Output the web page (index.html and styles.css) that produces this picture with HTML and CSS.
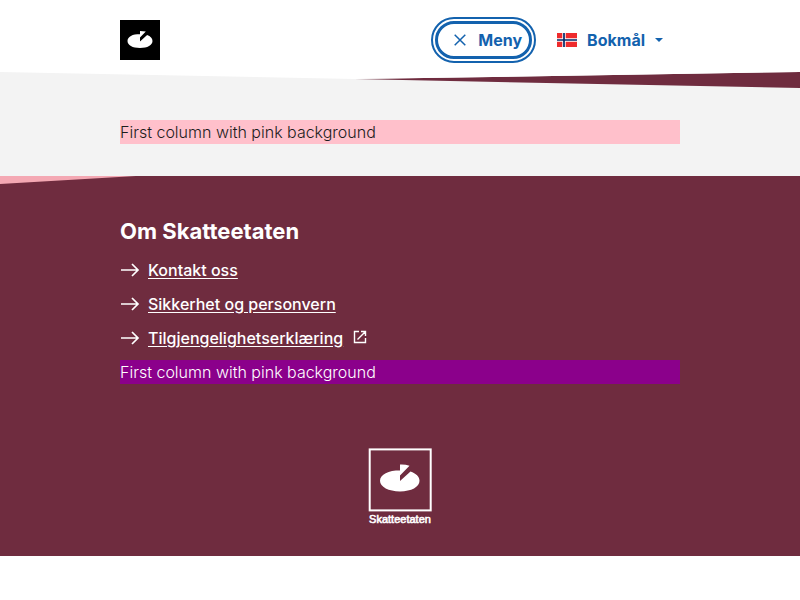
FILE: index.html
```html
<!DOCTYPE html>
<html lang="nb">
<head>
<meta charset="utf-8">
<meta name="viewport" content="width=device-width, initial-scale=1">
<title>Skatteetaten</title>
<link rel="stylesheet" href="styles.css">
</head>
<body>
<header class="header container">
  <a class="header-logo" href="#" aria-label="Skatteetaten">
    <svg viewBox="0 0 40 40" aria-hidden="true"><rect width="40" height="40"/><path fill="#fff" d="M20 14C12.500 14 7.500 16.800 7.500 21S12.500 28 20 28s12.500-2.800 12.500-7c0-2.600-2-4.700-5.400-5.900L20 21.500zM20 11l5.800.6-5.800 6z"/></svg>
  </a>
  <div class="header-actions">
    <button class="menu-button" type="button">
      <svg class="icon-close" viewBox="0 0 12 12" aria-hidden="true"><path d="M.7.700l10.600 10.600M11.300.700L.7 11.300"/></svg>
      <span>Meny</span>
    </button>
    <button class="language-button" type="button">
      <svg class="flag" viewBox="0 0 20 14" aria-hidden="true"><rect width="20" height="14" fill="#ef2b2d"/><path stroke="#fff" stroke-width="3.400" d="M7 0v14M0 7h20"/><path stroke="#002868" stroke-width="1.700" d="M7 0v14M0 7h20"/></svg>
      <span>Bokmål</span>
      <svg class="caret" viewBox="0 0 8 4" aria-hidden="true"><path d="M0 0h8L4 4z"/></svg>
    </button>
  </div>
</header>
<main class="main">
  <svg class="wedge" viewBox="0 0 800 16" preserveAspectRatio="none" aria-hidden="true"><path fill="#6f2c3f" d="M355 7.100L800 0v16z"/><path fill="#fff" d="M0 0l355 7.100L800 0z"/></svg>
  <div class="container main-content">
    <div class="column column-pink">First column with pink background</div>
  </div>
</main>
<footer class="footer">
  <svg class="footer-wedge" viewBox="0 0 800 8" preserveAspectRatio="none" aria-hidden="true"><path d="M0 0h136L0 8z"/></svg>
  <div class="container">
    <h2 class="footer-title">Om Skatteetaten</h2>
    <ul class="links">
      <li><a href="#"><svg class="arrow" viewBox="0 0 20 14" aria-hidden="true"><path d="M1 7h17M12 1l6 6-6 6"/></svg><span>Kontakt oss</span></a></li>
      <li><a href="#"><svg class="arrow" viewBox="0 0 20 14" aria-hidden="true"><path d="M1 7h17M12 1l6 6-6 6"/></svg><span>Sikkerhet og personvern</span></a></li>
      <li><a href="#"><svg class="arrow" viewBox="0 0 20 14" aria-hidden="true"><path d="M1 7h17M12 1l6 6-6 6"/></svg><span>Tilgjengelighetserklæring</span><svg class="external" viewBox="0 0 14 14" aria-hidden="true"><path d="M6 1.500H1.500v11h11V8M8 1.500h4.500V6M12.500 1.500L4.500 9.500"/></svg></a></li>
    </ul>
    <div class="column column-purple">First column with pink background</div>
    <div class="footer-logo">
      <svg viewBox="0 0 64 76" role="img" aria-label="Skatteetaten"><rect x="1.700" y="1.400" width="61" height="61" fill="none" stroke="#fff" stroke-width="2"/><path fill="#fff" d="M32 22.200c-11.400 0-20 4.300-20 10.600s8.600 10.600 20 10.600 19.500-4.300 19.500-10.600c0-4-3.500-7.300-9-9.200L32 33zM32 16.600c3.500-.2 6.500.2 9.500 1.200L32 27.500z"/><text class="logo-text" x="32" y="75" text-anchor="middle">Skatteetaten</text></svg>
    </div>
  </div>
</footer>
</body>
</html>
```
FILE: styles.css
```css
* {
  box-sizing: border-box;
}

body {
  margin: 0;
  background: #fff;
  color: #1c1c1c;
  font: 300 16px/24px Inter, sans-serif;
}

svg {
  display: block;
  flex: none;
}

.container {
  padding-inline: 15%;
}

.header {
  display: flex;
  align-items: center;
  justify-content: space-between;
  padding-top: 16px;
  padding-bottom: 8px;
}

.header-logo svg {
  width: 40px;
  height: 40px;
}

.header-actions {
  display: flex;
  align-items: center;
  gap: 16px;
}

.header-actions button {
  display: flex;
  align-items: center;
  gap: 10px;
  border: 0;
  background: transparent;
  color: #1362ae;
  font: 700 16px/24px Inter, sans-serif;
  cursor: pointer;
}

.header-actions .menu-button {
  gap: 12px;
  height: 38px;
  padding: 0 7px 0 16px;
  border: 3px solid #1362ae;
  border-radius: 20px;
  outline: 2px solid #1362ae;
  outline-offset: 2px;
}

.header-actions .language-button {
  height: 48px;
  padding: 0 17px 0 9px;
}

.icon-close {
  width: 12px;
  height: 12px;
  fill: none;
  stroke: currentColor;
  stroke-width: 1.5;
}

.flag {
  width: 20px;
  height: 14px;
}

.caret {
  width: 8px;
  height: 4px;
  fill: currentColor;
}

.main {
  background: #f3f3f3;
}

.wedge {
  width: 100%;
  height: 16px;
}

.main-content {
  padding-block: 32px;
}

.column-pink {
  background: #ffc0cb;
}

.column-purple {
  background: #8b008b;
}

.footer {
  padding-bottom: 32px;
  background: #6f2c3f;
  color: #fff;
}

.footer-wedge {
  width: 100%;
  height: 8px;
  fill: #f4a8b3;
}

.footer-title {
  margin: 0;
  padding-top: 32px;
  font-size: 22px;
  line-height: 30px;
}

.links {
  display: grid;
  gap: 10px;
  margin: 0;
  padding: 12px 0 10px;
  list-style: none;
}

.links a {
  display: flex;
  align-items: center;
  gap: 8px;
  width: fit-content;
  color: inherit;
  font-weight: 500;
  text-underline-offset: 2px;
}

.arrow {
  width: 20px;
  height: 14px;
  fill: none;
  stroke: currentColor;
  stroke-width: 1.7;
}

.external {
  width: 14px;
  height: 14px;
  margin-left: 2px;
  margin-bottom: 2px;
  fill: none;
  stroke: currentColor;
  stroke-width: 1.4;
}

.footer-logo {
  display: flex;
  justify-content: center;
  padding-top: 64px;
}

.footer-logo svg {
  width: 64px;
  height: 76px;
}

.logo-text {
  fill: #fff;
  stroke: #fff;
  stroke-width: 0.6;
  font: 400 11px "Liberation Sans", Arial, sans-serif;
}
```
